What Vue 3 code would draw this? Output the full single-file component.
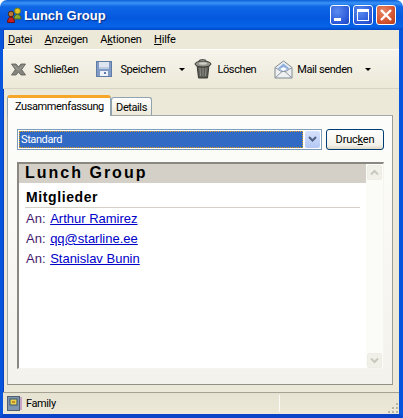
<script setup>
const members = ['Arthur Ramirez', 'qq@starline.ee', 'Stanislav Bunin']
</script>

<template>
  <div class="window">
    <header class="titlebar">
      <svg class="app-icon" width="17" height="17" viewBox="0 0 17 17">
        <circle cx="11.5" cy="4" r="3" fill="#e8c020" stroke="#6a7a20" stroke-width="1"/>
        <path d="M8 12c0-3 1.500-4.500 3.500-4.500S15 9 15 12z" fill="#8aa830" stroke="#4d6a20"/>
        <circle cx="5" cy="7" r="2.800" fill="#b8783c" stroke="#4a2a10" stroke-width="1"/>
        <path d="M1.500 15.500c0-3.500 1.500-5.500 3.500-5.500s3.500 2 3.500 5.500z" fill="#c62020" stroke="#6a1010"/>
      </svg>
      <span class="title">Lunch Group</span>
      <div class="caption-buttons">
        <button class="cap cap-blue">
          <svg width="20" height="20" viewBox="0 0 20 20"><rect x="4" y="13" width="7" height="3" fill="#fff"/></svg>
        </button>
        <button class="cap cap-blue">
          <svg width="20" height="20" viewBox="0 0 20 20"><rect x="4.500" y="4.500" width="11" height="11" fill="none" stroke="#fff"/><rect x="4" y="4" width="12" height="3" fill="#fff"/></svg>
        </button>
        <button class="cap cap-red">
          <svg width="20" height="20" viewBox="0 0 20 20"><path d="M5 5l10 10M15 5L5 15" stroke="#fff" stroke-width="2.400"/></svg>
        </button>
      </div>
    </header>

    <div class="frame">
      <nav class="menubar">
        <span><u>D</u>atei</span>
        <span><u>A</u>nzeigen</span>
        <span>A<u>k</u>tionen</span>
        <span><u>H</u>ilfe</span>
      </nav>

      <div class="toolbar">
        <div class="tool t-close">
          <svg width="15" height="15" viewBox="0 0 15 15">
            <path d="M.5 2h4.500l2.500 2.800L10 2h4.500l-3.800 5.500 3.800 5.500H10l-2.500-2.800L5 13H.5l3.800-5.500z" fill="#85857d" stroke="#5c5c55" stroke-width=".8"/>
            <path d="M3 3.500l4.500 4.500M12 3.500L8 7.500" stroke="#a9a9a0" stroke-width="1"/>
          </svg>
          <span>Schließen</span>
        </div>
        <div class="tool t-save">
          <svg width="16" height="16" viewBox="0 0 16 16">
            <rect x=".5" y=".5" width="15" height="15" fill="#7f9bc6" stroke="#5f7ba6"/>
            <rect x="3" y="1" width="10" height="7" fill="#dfe6f0"/>
            <rect x="3" y="6" width="10" height="2" fill="#bccbe0"/>
            <rect x="4" y="10" width="8" height="5" fill="#eef1f6"/>
            <rect x="8" y="11" width="2" height="2" fill="#5f7fb0"/>
          </svg>
          <span>Speichern</span>
        </div>
        <i class="arrow a-save"></i>
        <div class="tool t-delete">
          <svg width="18" height="20" viewBox="0 0 18 20">
            <path d="M3 6l1.500 13h9L15 6z" fill="#5c5c56" stroke="#3a3a36"/>
            <path d="M6 9l.5 8M9 9v8M12 9l-.5 8" stroke="#92928a"/>
            <ellipse cx="9" cy="5" rx="8" ry="3" fill="#94948b" stroke="#3a3a36"/>
            <ellipse cx="9" cy="4.500" rx="4" ry="1.200" fill="#cfcfc6"/>
            <path d="M5 2.500C5 0 12 0 12 2.500" fill="none" stroke="#55554f" stroke-width="1.200"/>
          </svg>
          <span>Löschen</span>
        </div>
        <div class="tool t-mail">
          <svg width="19" height="19" viewBox="0 0 19 19">
            <path d="M1 7.500L9.500 1 18 7.500V18H1z" fill="#eef0f2" stroke="#7f8a92"/>
            <path d="M3.500 8.500L9.500 3.500l6 5-6 3.500z" fill="#8fb0dc"/>
            <path d="M6 9l3.500-2 3.500 2-3.500 2z" fill="#fff"/>
            <path d="M1 18l7-6.500h3l7 6.500M1 7.500l7 4.500M18 7.500L11 12" fill="none" stroke="#8f979e"/>
          </svg>
          <span>Mail senden</span>
        </div>
        <i class="arrow a-mail"></i>
      </div>

      <div class="tabs">
        <div class="tab active">Zusammenfassung</div>
        <div class="tab">Details</div>
      </div>

      <main class="panel">
        <div class="controls">
          <div class="select">
            <div class="select-value">Standard</div>
            <div class="select-btn">
              <svg width="9" height="7" viewBox="0 0 9 7"><path d="M1 1l3.500 3.500L8 1" fill="none" stroke="#4d6185" stroke-width="2"/></svg>
            </div>
          </div>
          <button class="print">Druc<u>k</u>en</button>
        </div>

        <div class="view">
          <div class="doc">
            <div class="doc-title">Lunch Group</div>
            <h2>Mitglieder</h2>
            <div v-for="m in members" :key="m" class="row">An: <a>{{ m }}</a></div>
          </div>
          <div class="scrollbar">
            <div class="sb-btn">
              <svg width="9" height="7" viewBox="0 0 9 7"><path d="M1 5.500L4.500 2 8 5.500" fill="none" stroke="#c8c8bd" stroke-width="2"/></svg>
            </div>
            <div class="sb-btn">
              <svg width="9" height="7" viewBox="0 0 9 7"><path d="M1 1.500L4.500 5 8 1.500" fill="none" stroke="#c8c8bd" stroke-width="2"/></svg>
            </div>
          </div>
        </div>
      </main>

      <footer class="statusbar">
        <svg width="15" height="15" viewBox="0 0 15 15">
          <rect x=".5" y=".5" width="12" height="14" fill="#7f94ad" stroke="#4f5f70"/>
          <rect x="3" y="3" width="7" height="6" fill="#e9d24f" stroke="#39566f"/>
          <rect x="5" y="5" width="3" height="2" fill="#c68a1e"/>
          <rect x="13" y="1" width="2" height="13" fill="#c9a5c9"/>
        </svg>
        <span class="status-text">Family</span>
        <i class="status-sep"></i>
        <svg class="grip" width="12" height="12" viewBox="0 0 12 12" fill="#b8b5a4">
          <rect x="9" y="1" width="2" height="2"/>
          <rect x="5" y="5" width="2" height="2"/><rect x="9" y="5" width="2" height="2"/>
          <rect x="1" y="9" width="2" height="2"/><rect x="5" y="9" width="2" height="2"/><rect x="9" y="9" width="2" height="2"/>
        </svg>
      </footer>
    </div>
  </div>
</template>

<style>
html, body { margin: 0; background: #fff; }
</style>

<style scoped>
.window {
  width: 403px;
  height: 418px;
  display: flex;
  flex-direction: column;
  box-sizing: border-box;
  overflow: hidden;
  border-radius: 7px 7px 0 0;
  font: 11px Roboto, "Liberation Sans", sans-serif;
  letter-spacing: -.4px;
  color: #000;
}
.titlebar {
  height: 30px;
  flex: none;
  display: flex;
  align-items: center;
  box-sizing: border-box;
  padding: 0 7px 0 6px;
  background: linear-gradient(180deg, #0a5fd8 0%, #3a92f6 10%, #0f67e6 22%, #0458de 60%, #0663e8 88%, #0048c8 100%);
}
.title {
  margin-left: 1px;
  color: #fff;
  font: bold 13px "Liberation Sans", sans-serif;
  letter-spacing: 0;
  text-shadow: 1px 1px 1px #0a2f8a;
}
.caption-buttons { margin-left: auto; display: flex; gap: 3px; }
.cap {
  width: 20px;
  height: 20px;
  padding: 0;
  box-sizing: border-box;
  border: 1px solid #fff;
  border-radius: 3px;
  display: flex;
  align-items: center;
  justify-content: center;
}
.cap svg { flex: none; }
.cap-blue { background: radial-gradient(circle at 35% 30%, #5c8cf0, #2a57d8 70%, #1e42b8); }
.cap-red { background: radial-gradient(circle at 35% 30%, #e88868, #d2502c 65%, #b03a18); }

.frame {
  flex: 1;
  min-height: 0;
  display: flex;
  flex-direction: column;
  background: #ece9d8;
  border-left: 3px solid #0855dd;
  border-right: 4px solid #0855dd;
  border-bottom: 5px solid #0843c8;
  box-shadow: inset 1px 0 #0a3fc0;
}
.menubar {
  height: 19px;
  flex: none;
  display: flex;
  align-items: center;
  padding-left: 5px;
  gap: 12.500px;
  letter-spacing: -.25px;
}
.toolbar {
  height: 40px;
  flex: none;
  box-sizing: border-box;
  display: flex;
  align-items: center;
  border-top: 1px solid #fff;
  border-bottom: 1px solid #d8d5c4;
  background: linear-gradient(180deg, #f6f4ec, #ece9d8);
}
.tool { display: flex; align-items: center; }
.tool span { white-space: nowrap; }
.t-close { margin-left: 8px; gap: 8px; }
.t-save { margin-left: 18px; gap: 8px; }
.t-delete { margin-left: 9px; gap: 5px; }
.t-mail { margin-left: 18px; gap: 4px; }
.arrow {
  width: 0;
  height: 0;
  border-left: 3px solid transparent;
  border-right: 3px solid transparent;
  border-top: 3px solid #000;
}
.a-save { margin-left: 14px; }
.a-mail { margin-left: 13px; }

.tabs {
  height: 26px;
  flex: none;
  box-sizing: border-box;
  padding: 5px 0 0 4px;
  display: flex;
  align-items: flex-end;
}
.tab {
  box-sizing: border-box;
  width: 41px;
  height: 18px;
  padding-top: 1px;
  border: 1px solid #8fa3ae;
  border-bottom: 0;
  border-radius: 3px 3px 0 0;
  background: linear-gradient(180deg, #fff, #ece9d8);
  display: flex;
  align-items: center;
  justify-content: center;
}
.tab.active {
  position: relative;
  z-index: 1;
  width: 104px;
  height: 21px;
  margin-bottom: -1px;
  padding: 0 0 2px 7px;
  justify-content: flex-start;
  border: 1px solid #8fa3ae;
  border-top: 3px solid #f6a628;
  border-bottom: 0;
  background: #fdfdfb;
}
.panel {
  flex: none;
  height: 270px;
  margin: 0 6px 0 4px;
  box-sizing: border-box;
  border: 1px solid #919b9c;
  border-color: #a2aaa8 #9a9d96 #8f8f88 #a2aaa8;
  padding: 13px 8px 14px 9px;
  background: linear-gradient(180deg, #fdfdfb, #f3f2ec);
  display: flex;
  flex-direction: column;
}
.controls { display: flex; gap: 4px; height: 21px; flex: none; }
.select {
  flex: 1;
  box-sizing: border-box;
  display: flex;
  align-items: center;
  border: 1px solid #7f9db9;
  background: #fff;
  padding: 1px;
}
.select-value {
  flex: 1;
  height: 17px;
  box-sizing: border-box;
  line-height: 17px;
  padding-left: 2px;
  color: #fff;
  background: #316ac5;
  outline: 1px dotted #e0a020;
  outline-offset: -1px;
}
.select-btn {
  width: 15px;
  height: 17px;
  margin-left: 2px;
  display: flex;
  align-items: center;
  justify-content: center;
  border-radius: 2px;
  background: linear-gradient(180deg, #d6e2fb, #b4c8f5);
}
.print {
  width: 58px;
  padding: 0;
  box-sizing: border-box;
  font: 11px Roboto, "Liberation Sans", sans-serif;
  letter-spacing: -.2px;
  color: #000;
  border: 1px solid #003c74;
  border-radius: 3px;
  background: linear-gradient(180deg, #fff, #f3f2ea 80%, #dcd8c8);
}
.view {
  height: 207px;
  margin-top: 12px;
  flex: none;
  display: flex;
  box-sizing: border-box;
  border-top: 2px solid #8a8880;
  border-left: 2px solid #8a8880;
  border-right: 1px solid #f5f4ee;
  border-bottom: 1px solid #f5f4ee;
  background: #fff;
  font-family: "Liberation Sans", sans-serif;
  letter-spacing: 0;
}
.doc { flex: 1; min-width: 0; }
.doc-title {
  height: 19px;
  line-height: 18px;
  padding-left: 6px;
  background: #d4d0c8;
  font-size: 16px;
  font-weight: bold;
  letter-spacing: 2px;
}
h2 {
  margin: 6px 6px 0;
  height: 18px;
  line-height: 17px;
  font-size: 14px;
  font-weight: bold;
  letter-spacing: .6px;
  padding-left: 1px;
  border-bottom: 1px solid #d4d0c8;
}
.row {
  height: 20px;
  line-height: 20px;
  padding-left: 7px;
  font-size: 13px;
  color: #46196e;
}
.row a {
  margin-left: 1px;
  color: #0000c8;
  text-decoration: underline;
}
.doc h2 + .row { margin-top: 1px; }
.scrollbar {
  width: 17px;
  flex: none;
  box-sizing: border-box;
  padding: 1px 1px 0 1px;
  display: flex;
  flex-direction: column;
  justify-content: space-between;
  background: #fbfbf8;
}
.sb-btn {
  width: 15px;
  height: 15px;
  box-sizing: border-box;
  border: 1px solid #eeede5;
  border-radius: 2px;
  background: #f0efe8;
  display: flex;
  align-items: center;
  justify-content: center;
}
.statusbar {
  height: 22px;
  margin-top: 7px;
  flex: none;
  box-sizing: border-box;
  border-top: 1px solid #a5a294;
  display: flex;
  align-items: center;
  padding-left: 4px;
  background: linear-gradient(180deg, #e6e3d2, #ece9d8);
}
.status-text { margin-left: 4px; width: 31px; }
.status-sep {
  width: 1px;
  height: 17px;
  margin-left: 222px;
  background: #fbfaf4;
}
.grip { margin-left: auto; align-self: flex-end; }
</style>
